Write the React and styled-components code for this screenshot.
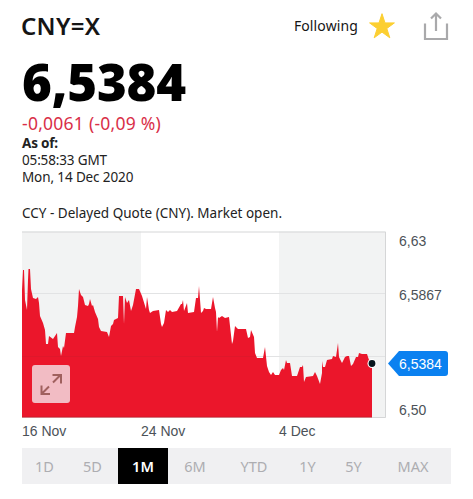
import React, { useState } from 'react'
import styled, { createGlobalStyle } from 'styled-components'

const GlobalStyle = createGlobalStyle`
  * {
    box-sizing: border-box;
  }
  body {
    margin: 0;
    background: #fff;
  }
  p, h1 {
    margin: 0;
  }
`

const Page = styled.main`
  width: 473px;
  height: 499px;
  padding: 10px 22px 0;
  color: #151515;
  font-family: 'Noto Sans', sans-serif;
`

const Header = styled.header`
  display: flex;
  align-items: center;
  justify-content: space-between;
  height: 31px;
`

const Symbol = styled.h1`
  margin-left: -1px;
  font-size: 24px;
  line-height: 31px;
  font-weight: 600;
  letter-spacing: 0.3px;
`

const Actions = styled.div`
  display: flex;
  align-items: center;
  margin-right: 2px;
`

const Following = styled.span`
  font-size: 14px;
  line-height: 30px;
  letter-spacing: 0.12px;
`

const StarIcon = styled.svg`
  margin: 0 27px 0 10px;
`

const Price = styled.p`
  height: 72px;
  padding-top: 4px;
  color: #000;
  font-size: 51px;
  line-height: 72px;
  font-weight: 900;
  letter-spacing: -0.2px;
  white-space: nowrap;
`

const Change = styled.p`
  height: 22px;
  color: #d92f48;
  font-size: 17.5px;
  line-height: 20px;
  letter-spacing: 0.25px;
`

const Info = styled.p`
  font-size: 13.5px;
  line-height: 17px;
  font-weight: ${({ $bold }) => ($bold ? 700 : 400)};
  letter-spacing: ${({ $spacing }) => $spacing || 0}px;
  color: #222;
`

const Quote = styled(Info)`
  margin-top: 19px;
`

const ChartRow = styled.section`
  display: flex;
  margin-top: 9px;
  height: 187px;
`

const Plot = styled.div`
  position: relative;
  width: 364px;
  height: 187px;
`

const Expand = styled.button`
  position: absolute;
  left: 10px;
  bottom: 15px;
  width: 38px;
  height: 38px;
  padding: 0;
  border: 0;
  border-radius: 3px;
  background: #f2bcc4;
`

const Axis = styled.div`
  display: flex;
  flex-direction: column;
  width: 66px;
  color: #4c5258;
  font: 14px/18px 'Liberation Sans', sans-serif;
`

const AxisLabel = styled.span`
  margin: ${({ $top }) => $top}px 0 0 13px;
`

const PriceTag = styled.span`
  display: block;
  width: 60px;
  height: 25px;
  margin: 47px 0 0 2px;
  padding-left: 11px;
  border-radius: 3px;
  background: #0b81f0;
  clip-path: polygon(0 50%, 11px 0, 100% 0, 100% 100%, 11px 100%);
  color: #fff;
  line-height: 26px;
`

const Dates = styled.div`
  display: grid;
  grid-template-columns: 119px 138px 1fr;
  height: 30px;
  color: #4c5258;
  font: 14px/26px 'Liberation Sans', sans-serif;
`

const Ranges = styled.nav`
  display: flex;
  height: 36px;
  background: #f0f0f2;
`

const Range = styled.button`
  width: ${({ $width }) => $width}px;
  padding: 0;
  border: 0;
  background: ${({ $active }) => ($active ? '#000' : 'transparent')};
  color: ${({ $active }) => ($active ? '#fff' : '#adadb1')};
  font: ${({ $active }) => ($active ? 600 : 400)} 14.5px 'Noto Sans', sans-serif;
`

const ranges = [
  ['1D', 45],
  ['5D', 51],
  ['1M', 50],
  ['6M', 54],
  ['YTD', 64],
  ['1Y', 43],
  ['5Y', 49],
  ['MAX', 70],
]

const line = `22,290 23,270 24,270 25,300 27,310 28,280 28.5,269 30,269 31,289 33,298
36,299 38,297 39,303 40,316 43,323 45,330 46,344 48,344 49,336 53,339 57,333 58,347
60,349 61,356 63,346 64,348 66,333 74,333 75,327 77,317 78,306 79,289 81,295 83,297
85,305 88,306 89,304 90,299 92,306 93,305 95,312 98,319 99,327 101,331 107,332 109,337
111,326 113,324 114,320 118,318 119,296 123,296 124,324 125,297 127,303 129,300
131,311 133,305 136,289 139,289 142,296 146,309 147,297 149,310 150,313 153,311 159,310
161,324 162,327 164,323 166,310 168,312 170,310 172,312 177,311 181,304 182,304 183,300
184,311 187,303 188,313 194,312 196,298 198,298 199,286 201,313 203,311 204,308 206,309
211,309 213,297 215,308 216,312 217,332 218,317 219,318 222,316 225,318 229,317 232,344
233,341 235,326 238,329 246,329 248,338 250,337 251,330 254,337 255,353 257,358 263,358
265,347 267,366 269,372 271,375 273,372 275,375 279,375 281,370 283,368 284,370 286,360
287,363 290,363 292,376 297,376 300,367 302,367 303,365 304,382 306,377 313,376 315,372
317,376 320,384 322,373 322,361 323,367 325,367 327,360 332,359 333,356 336,357 338,343
339,357 342,363 345,357 347,356 349,356 351,366 353,364 356,357 358,357 359,353 362,354
367,354 369,360 372,365`

const Chart = () => (
  <svg width="364" height="187" viewBox="22 231 364 187">
    <path fill="#f2f3f3" d="M22 231.5H141V418H22ZM279 231.5H386V418H279Z" />
    <path stroke="#d5d6d7" d="M22 232H385.5V417.5H22" fill="none" />
    <path stroke="#e2e3e4" d="M22 293.5H385M22 356.5H385" />
    <polygon fill="#eb162b" points={`22,417 ${line} 372,417`} />
    <path stroke="#d51b2b" strokeOpacity=".55" d="M22 356.5H256" />
    <path stroke="#cf1b2b" d="M22 417H372" />
    <circle cx="372" cy="363.5" r="4.5" fill="#fff" />
    <circle cx="372" cy="363.5" r="3.4" fill="#06151d" />
  </svg>
)

const App = () => {
  const [range, setRange] = useState('1M')

  return (
    <Page>
      <GlobalStyle />
      <Header>
        <Symbol>CNY=X</Symbol>
        <Actions>
          <Following>Following</Following>
          <StarIcon width="28" height="28" viewBox="0 0 28 28">
            <path
              d="m14 1.7 3 9.2h9.4l-7.6 5.6 3 9.3-7.8-5.7-7.8 5.7 3-9.3-7.6-5.6H11Z"
              fill="#fccf31"
              stroke="#fccf31"
              strokeWidth="1"
              strokeLinejoin="round"
            />
          </StarIcon>
          <svg width="26" height="30" viewBox="0 0 26 30" fill="none" stroke="#a9a9ab" strokeWidth="2.2">
            <path d="M2 12.5v15.5h22V12.5M13 20V2.5M8 7.5l5-5 5 5" />
          </svg>
        </Actions>
      </Header>
      <Price>6,5384</Price>
      <Change>-0,0061 (-0,09 %)</Change>
      <Info $bold $spacing={-0.2}>As of:</Info>
      <Info $spacing={-0.15}>05:58:33 GMT</Info>
      <Info $spacing={-0.12}>Mon, 14 Dec 2020</Info>
      <Quote>CCY - Delayed Quote (CNY). Market open.</Quote>
      <ChartRow>
        <Plot>
          <Chart />
          <Expand aria-label="Expand chart">
            <svg width="38" height="38" viewBox="0 0 38 38" fill="none" stroke="#a0605e" strokeWidth="2">
              <path d="M21 17.5 28.5 10M20.5 10H29V18.5M17 21.5 9.5 29M9.5 20.5V29H18" />
            </svg>
          </Expand>
        </Plot>
        <Axis>
          <AxisLabel $top={1}>6,63</AxisLabel>
          <AxisLabel $top={36}>6,5867</AxisLabel>
          <PriceTag>6,5384</PriceTag>
          <AxisLabel $top={25}>6,50</AxisLabel>
        </Axis>
      </ChartRow>
      <Dates>
        <span>16 Nov</span>
        <span>24 Nov</span>
        <span>4 Dec</span>
      </Dates>
      <Ranges>
        {ranges.map(([label, width]) => (
          <Range key={label} $width={width} $active={label === range} onClick={() => setRange(label)}>
            {label}
          </Range>
        ))}
      </Ranges>
    </Page>
  )
}

export default App
